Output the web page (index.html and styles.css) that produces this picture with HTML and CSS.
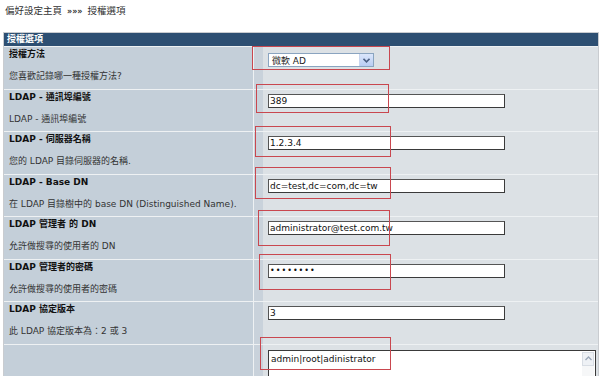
FILE: index.html
```html
<!DOCTYPE html>
<html lang="zh-Hant">
<head>
  <meta charset="UTF-8">
  <title>授權選項</title>
  <link rel="stylesheet" href="styles.css">
</head>
<body>
  <div class="crumbs">偏好設定主頁 <b>»»»</b> 授權選項</div>

  <div class="form">
    <div class="form-head">授權選項</div>

    <div class="label">
      <b>授權方法</b>
      <span>您喜歡記錄哪一種授權方法?</span>
    </div>
    <div class="field">
      <div class="select">
        <span>微軟 AD</span>
        <i class="arrow">
          <svg width="7" height="5" viewBox="0 0 7 5"><path d="M0.5 0.8 L3.5 3.8 L6.5 0.8" fill="none" stroke="#4d6185" stroke-width="1.6"/></svg>
        </i>
      </div>
      <div class="mark mark-1"></div>
    </div>

    <div class="label">
      <b>LDAP - 通訊埠編號</b>
      <span>LDAP - 通訊埠編號</span>
    </div>
    <div class="field">
      <input type="text" value="389">
      <div class="mark mark-2"></div>
    </div>

    <div class="label">
      <b>LDAP - 伺服器名稱</b>
      <span>您的 LDAP 目錄伺服器的名稱.</span>
    </div>
    <div class="field">
      <input type="text" value="1.2.3.4">
      <div class="mark mark-3"></div>
    </div>

    <div class="label">
      <b>LDAP - Base DN</b>
      <span>在 LDAP 目錄樹中的 base DN (Distinguished Name).</span>
    </div>
    <div class="field">
      <input type="text" value="dc=test,dc=com,dc=tw">
      <div class="mark mark-4"></div>
    </div>

    <div class="label">
      <b>LDAP 管理者 的 DN</b>
      <span>允許做搜尋的使用者的 DN</span>
    </div>
    <div class="field">
      <input type="text" value="administrator@test.com.tw">
      <div class="mark mark-5"></div>
    </div>

    <div class="label">
      <b>LDAP 管理者的密碼</b>
      <span>允許做搜尋的使用者的密碼</span>
    </div>
    <div class="field">
      <input type="password" value="12345678">
      <div class="mark mark-6"></div>
    </div>

    <div class="label">
      <b>LDAP 協定版本</b>
      <span>此 LDAP 協定版本為：2 或 3</span>
    </div>
    <div class="field">
      <input type="text" value="3">
    </div>

    <div class="label"></div>
    <div class="field">
      <div class="textarea">
        <span>admin|root|adinistrator</span>
        <div class="scroll">
          <i class="scroll-up">
            <svg width="7" height="5" viewBox="0 0 7 5"><path d="M0.5 4 L3.5 1 L6.5 4" fill="none" stroke="#9aa7b8" stroke-width="1.3"/></svg>
          </i>
        </div>
      </div>
      <div class="mark mark-7"></div>
    </div>
  </div>
</body>
</html>
```

FILE: styles.css
```css
body {
  margin: 0;
  padding: 0 0 0 3px;
  background: #fff;
  font-family: "DejaVu Sans", "Noto Sans CJK TC", sans-serif;
  font-size: 9px;
  color: #222;
  overflow: hidden;
}
.crumbs {
  height: 24px;
  line-height: 22px;
  padding-left: 2px;
  font-size: 9.5px;
  color: #333;
  margin-bottom: 8px;
}
.crumbs b {
  font-size: 8px;
  margin: 0 2px;
}
.form {
  width: 594px;
  display: grid;
  grid-template-columns: 249px 1fr;
  grid-template-rows: 13px;
  grid-auto-rows: 41.5px;
  gap: 1px;
  background: #eef1f3;
  border: 1px solid #c9ccd0;
}
.form-head {
  grid-column: 1 / 3;
  line-height: 13px;
  background: #2d4f72;
  color: #fff;
  font-weight: bold;
  padding-left: 3px;
}
.label {
  background: #c4cfd9;
  padding: 2px 0 0 5px;
  display: flex;
  flex-direction: column;
  gap: 11px;
  line-height: 11px;
}
.label b {
  font-size: 9px;
  color: #111;
}
.label span {
  font-size: 9px;
  color: #333;
}
.field {
  position: relative;
  background: linear-gradient(to right, #c9d2db 0 9px, #dce1e5 9px);
  padding: 4px 0 0 14px;
}
input {
  display: block;
  box-sizing: border-box;
  width: 237px;
  height: 14px;
  margin: 0;
  padding: 0 1px;
  border: 1px solid #3a3a3a;
  border-top-color: #555;
  border-left-color: #555;
  background: #fff;
  font-family: "DejaVu Sans", sans-serif;
  font-size: 9px;
  color: #111;
  outline: none;
}
input[type=password] {
  font-size: 8px;
  letter-spacing: 1px;
}
.select {
  box-sizing: border-box;
  width: 106px;
  height: 14px;
  margin-top: 2px;
  border: 1px solid #8aa4c0;
  background: #fff;
  display: flex;
  align-items: center;
  justify-content: space-between;
  padding-left: 3px;
  font-size: 9px;
}
.arrow {
  width: 13px;
  height: 12px;
  background: linear-gradient(#dbe6fb, #b9cdf3);
  border-left: 1px solid #c7d5ee;
  display: flex;
  align-items: center;
  justify-content: center;
}
.textarea {
  box-sizing: border-box;
  width: 328px;
  height: 40px;
  margin-top: 1px;
  border: 1px solid #3a3a3a;
  border-bottom: 0;
  background: #fff;
  display: flex;
  justify-content: space-between;
  padding: 3px 0 0 2px;
  font-size: 9px;
  color: #111;
}
.scroll {
  width: 12px;
  margin-right: 1px;
  margin-top: -2px;
  background: #f6f7f8;
}
.scroll-up {
  display: flex;
  align-items: center;
  justify-content: center;
  height: 12px;
  border: 1px solid #d8dde4;
  background: #eef1f5;
}
.mark {
  position: absolute;
  border: 1.5px solid #c9474f;
  box-sizing: border-box;
}
.mark-1 { left: -2px; top: -1px; width: 138px; height: 24px; }
.mark-2 { left: 2px; top: -6px; width: 133px; height: 29px; }
.mark-3 { left: 1px; top: -6px; width: 136px; height: 31px; }
.mark-4 { left: 1px; top: -8px; width: 136px; height: 32px; }
.mark-5 { left: 4px; top: -7px; width: 132px; height: 36px; }
.mark-6 { left: 5px; top: -6px; width: 132px; height: 36px; }
.mark-7 { left: 6px; top: -8px; width: 131px; height: 33px; }
```
